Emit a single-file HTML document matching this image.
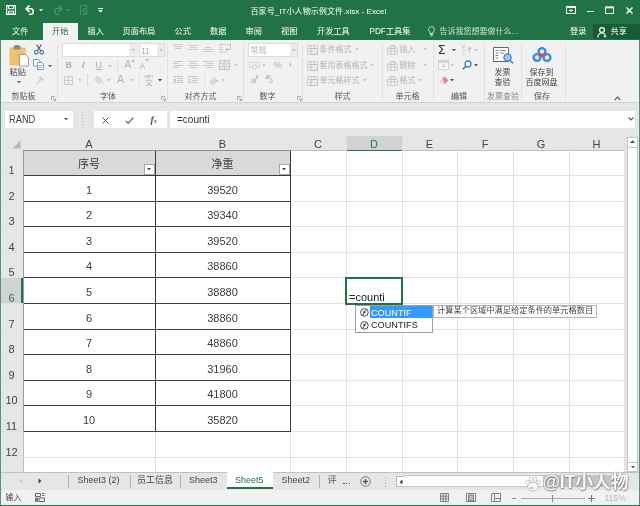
<!DOCTYPE html>
<html><head><meta charset="utf-8"><title>Excel</title>
<style>
*{box-sizing:border-box;margin:0;padding:0}
html,body{width:640px;height:506px;overflow:hidden;background:#e6e6e6}
body{position:relative;will-change:transform;font-family:"Liberation Sans","Noto Sans CJK SC",sans-serif;font-size:9px;color:#333}
.a{position:absolute}
.t{position:absolute;white-space:nowrap;line-height:1}
.tab{position:absolute;top:27px;color:#fff;font-size:8.2px;line-height:9px;white-space:nowrap}
.gl{position:absolute;top:93px;font-size:8px;color:#666;line-height:8px;white-space:nowrap}
.rt{position:absolute;font-size:8px;color:#b4b4b4;line-height:8px;white-space:nowrap}
.sep{position:absolute;top:44px;width:1px;height:56px;background:#e2e2e2}
.ch{position:absolute;top:137.6px;height:13px;font-size:11px;line-height:13px;text-align:center;color:#444}
.rh{position:absolute;left:0.5px;width:22px;font-size:11px;text-align:center;color:#444;line-height:12px}
.cell{position:absolute;font-size:11px;text-align:center;color:#3a3a3a}
.st{position:absolute;top:475px;font-size:9px;line-height:11px;color:#444;white-space:nowrap}
.gv{position:absolute;width:1px;background:#e1e1e1}
.gh{position:absolute;height:1px;background:#e1e1e1}
.bv{position:absolute;width:1px;background:#3c3c3c}
.bh{position:absolute;height:1px;background:#3c3c3c}
</style></head><body>
<div class="a" style="left:0px;top:0px;width:640px;height:40px;background:#217346"></div>
<div class="t" style="left:250.5px;top:7.8px;font-size:8.1px;color:#fff;">百家号_IT小人物示例文件.xlsx - Excel</div>
<svg class="a" style="left:6px;top:5px" width="10" height="10" viewBox="0 0 10 10"><path d="M0.6 0.6h8.800v8.800h-8.800z" fill="none" stroke="#fff" stroke-width="1.200"/><path d="M2.500 0.500h5v3.200h-5z" fill="none" stroke="#fff" stroke-width="1"/><path d="M2.500 6.200h5v3.300h-5z" fill="none" stroke="#fff" stroke-width="1"/><path d="M3 7.500h4v2h-4z" fill="#fff" opacity="0.5"/></svg>
<svg class="a" style="left:25px;top:5px" width="11" height="10" viewBox="0 0 11 10"><path d="M4.5 0.5L1 3.8l3.5 3.2" fill="none" stroke="#fff" stroke-width="1.6"/><path d="M1.5 3.8h5a3 3 0 0 1 0 5.5H4" fill="none" stroke="#fff" stroke-width="1.6"/></svg>
<svg class="a" style="left:39px;top:8.8px" width="4" height="2.4" viewBox="0 0 4 2.4"><path d="M0 0h4L2 2.4z" fill="#fff"/></svg>
<svg class="a" style="left:52px;top:5px" width="11" height="10" viewBox="0 0 11 10"><path d="M6.5 0.5L10 3.8 6.5 7" fill="none" stroke="#4d8d6b" stroke-width="1.6"/><path d="M9.5 3.8h-5a3 3 0 0 0 0 5.5H7" fill="none" stroke="#4d8d6b" stroke-width="1.6"/></svg>
<svg class="a" style="left:66px;top:8.8px" width="4" height="2.4" viewBox="0 0 4 2.4"><path d="M0 0h4L2 2.4z" fill="#4d8d6b"/></svg>
<svg class="a" style="left:80px;top:5px" width="9" height="10" viewBox="0 0 9 10"><path d="M0.5 0.5h6v9h-6z" fill="none" stroke="#4d8d6b"/><circle cx="5" cy="5.5" r="2.3" fill="#2f7d54" stroke="#4d8d6b"/><path d="M6.5 7.5l2 2" stroke="#4d8d6b"/></svg>
<svg class="a" style="left:98px;top:8px" width="5" height="5" viewBox="0 0 5 5"><path d="M0 0.5h5" stroke="#fff"/><path d="M0 2h5L2.5 4.6z" fill="#fff"/></svg>
<svg class="a" style="left:566px;top:6px" width="10" height="8" viewBox="0 0 10 8"><path d="M0.5 0.5h9v7h-9z" fill="none" stroke="#fff"/><path d="M0.5 1.5h9" stroke="#fff"/><path d="M3 4.5h4M5 3v3" stroke="#fff" stroke-width="1"/></svg>
<div class="a" style="left:587px;top:10.5px;width:7px;height:1.6px;background:#fff"></div>
<svg class="a" style="left:605px;top:6px" width="9" height="8" viewBox="0 0 9 8"><path d="M0.5 1h8v6.5h-8z" fill="none" stroke="#fff"/><path d="M0.5 1.5h8" stroke="#fff" stroke-width="1.6"/></svg>
<svg class="a" style="left:626px;top:7px" width="7" height="7" viewBox="0 0 7 7"><path d="M0.5 0.5l6 6M6.5 0.5l-6 6" stroke="#fff" stroke-width="1.5"/></svg>
<div class="a" style="left:43px;top:23px;width:35px;height:18px;background:#f1f1f1"></div>
<div class="a" style="left:593px;top:24px;width:47px;height:15px;background:#185c37"></div>
<div class="tab" style="left:12px;color:#fff">文件</div>
<div class="tab" style="left:52px;color:#217346">开始</div>
<div class="tab" style="left:87.5px;color:#fff">插入</div>
<div class="tab" style="left:122.5px;color:#fff">页面布局</div>
<div class="tab" style="left:174.5px;color:#fff">公式</div>
<div class="tab" style="left:210px;color:#fff">数据</div>
<div class="tab" style="left:245.5px;color:#fff">审阅</div>
<div class="tab" style="left:281px;color:#fff">视图</div>
<div class="tab" style="left:317px;color:#fff">开发工具</div>
<div class="tab" style="left:369.5px;color:#fff">PDF工具集</div>
<div class="tab" style="left:570px;color:#fff">登录</div>
<div class="tab" style="left:610.5px;color:#fff">共享</div>
<div class="tab" style="left:439.5px;color:#cfe3d8;font-size:8px">告诉我您想要做什么...</div>
<svg class="a" style="left:428px;top:26px" width="7" height="11" viewBox="0 0 7 11"><path d="M3.5 0.6a2.9 2.9 0 0 1 1.6 5.3v1.6H1.9V5.9A2.9 2.9 0 0 1 3.5 0.6z" fill="none" stroke="#cfe3d8" stroke-width="0.9"/><path d="M2 8.6h3M2.4 10h2.2" stroke="#cfe3d8" stroke-width="0.9"/></svg>
<svg class="a" style="left:597px;top:27px" width="10" height="11" viewBox="0 0 10 11"><circle cx="5" cy="3" r="2.4" fill="none" stroke="#fff" stroke-width="1.2"/><path d="M0.8 10.5c0-3 2-4.5 4.2-4.5 1.2 0 2.2 0.4 3 1.2" fill="none" stroke="#fff" stroke-width="1.2"/><path d="M6.5 9h3M8 7.5v3" stroke="#fff" stroke-width="1"/></svg>
<div class="a" style="left:0px;top:40px;width:640px;height:63px;background:#f1f1f1;border-bottom:1px solid #d2d2d2"></div>
<div class="gl" style="left:11.5px;color:#555">剪贴板</div>
<div class="gl" style="left:100px;color:#555">字体</div>
<div class="gl" style="left:184.5px;color:#555">对齐方式</div>
<div class="gl" style="left:259.5px;color:#555">数字</div>
<div class="gl" style="left:334.5px;color:#555">样式</div>
<div class="gl" style="left:395.5px;color:#555">单元格</div>
<div class="gl" style="left:451px;color:#555">编辑</div>
<div class="gl" style="left:487px;color:#888">发票查验</div>
<div class="gl" style="left:534px;color:#555">保存</div>
<div class="sep" style="left:57px"></div>
<div class="sep" style="left:166.5px"></div>
<div class="sep" style="left:243px"></div>
<div class="sep" style="left:301.5px"></div>
<div class="sep" style="left:382px"></div>
<div class="sep" style="left:432.5px"></div>
<div class="sep" style="left:483.5px"></div>
<div class="sep" style="left:521px"></div>
<div class="sep" style="left:564.5px"></div>
<svg class="a" style="left:50.5px;top:96px" width="5" height="5" viewBox="0 0 5 5"><path d="M0.5 4V0.5H4" fill="none" stroke="#999" stroke-width="0.8"/><path d="M2 2l2.5 2.5M4.5 2.5v2h-2" fill="none" stroke="#999" stroke-width="0.8"/></svg>
<svg class="a" style="left:161px;top:96px" width="5" height="5" viewBox="0 0 5 5"><path d="M0.5 4V0.5H4" fill="none" stroke="#999" stroke-width="0.8"/><path d="M2 2l2.5 2.5M4.5 2.5v2h-2" fill="none" stroke="#999" stroke-width="0.8"/></svg>
<svg class="a" style="left:237px;top:96px" width="5" height="5" viewBox="0 0 5 5"><path d="M0.5 4V0.5H4" fill="none" stroke="#999" stroke-width="0.8"/><path d="M2 2l2.5 2.5M4.5 2.5v2h-2" fill="none" stroke="#999" stroke-width="0.8"/></svg>
<svg class="a" style="left:297px;top:96px" width="5" height="5" viewBox="0 0 5 5"><path d="M0.5 4V0.5H4" fill="none" stroke="#999" stroke-width="0.8"/><path d="M2 2l2.5 2.5M4.5 2.5v2h-2" fill="none" stroke="#999" stroke-width="0.8"/></svg>
<svg class="a" style="left:614px;top:96px" width="7" height="5" viewBox="0 0 7 5"><path d="M0.7 4.2L3.5 1.2 6.3 4.2" fill="none" stroke="#555" stroke-width="1.2"/></svg>
<svg class="a" style="left:9px;top:45px" width="20" height="22" viewBox="0 0 20 22"><rect x="0.5" y="2.5" width="16" height="18" fill="#efc26a"/><rect x="4.5" y="0.5" width="7" height="4" rx="1" fill="#8a8a8a"/><rect x="6.5" y="0" width="3" height="2" fill="#8a8a8a"/><path d="M10.5 9.5h6l3 3v8.5h-9z" fill="#fff" stroke="#8a8a8a" stroke-width="0.8"/></svg>
<div class="rt" style="left:9.5px;top:68.5px;color:#444;font-size:8.2px">粘贴</div>
<svg class="a" style="left:16.5px;top:80.8px" width="4" height="2.4" viewBox="0 0 4 2.4"><path d="M0 0h4L2 2.4z" fill="#666"/></svg>
<svg class="a" style="left:34px;top:44px" width="10" height="11" viewBox="0 0 10 11"><path d="M2.5 0.5L7 7M7.5 0.5L3 7" stroke="#555" stroke-width="1.1" fill="none"/><circle cx="2.3" cy="8.3" r="1.8" fill="none" stroke="#3d6fb6" stroke-width="1.1"/><circle cx="7.7" cy="8.3" r="1.8" fill="none" stroke="#3d6fb6" stroke-width="1.1"/></svg>
<svg class="a" style="left:33px;top:59px" width="11" height="11" viewBox="0 0 11 11"><path d="M0.5 0.5h5l1.5 1.5v5h-6.5z" fill="#fff" stroke="#6d8fc0" stroke-width="0.9"/><path d="M4.5 3.5h4.5l1.5 1.5v5.5h-6z" fill="#fff" stroke="#6d8fc0" stroke-width="0.9"/><path d="M6 6.5h3M6 8.5h3" stroke="#6d8fc0" stroke-width="0.7"/></svg>
<svg class="a" style="left:48px;top:64.8px" width="4" height="2.4" viewBox="0 0 4 2.4"><path d="M0 0h4L2 2.4z" fill="#666"/></svg>
<svg class="a" style="left:35px;top:75px" width="10" height="10" viewBox="0 0 10 10"><path d="M5.5 0.8l3.5 3.5-2 2L3.500 2.800z" fill="#cfcfcf"/><path d="M4 4.800L1 8.500l1 1 3.500-3.200z" fill="#d8d8d8"/></svg>
<div class="a" style="left:61.5px;top:43px;width:75.5px;height:14px;background:#fff;border:1px solid #dcdcdc"></div>
<div class="a" style="left:129px;top:44px;width:7.5px;height:12px;background:#ececec"></div>
<svg class="a" style="left:131px;top:49.3px" width="4" height="2.4" viewBox="0 0 4 2.4"><path d="M0 0h4L2 2.4z" fill="#c4c4c4"/></svg>
<div class="a" style="left:138.5px;top:43px;width:26px;height:14px;background:#fff;border:1px solid #dcdcdc"></div>
<div class="a" style="left:156.5px;top:44px;width:7.5px;height:12px;background:#ececec"></div>
<svg class="a" style="left:158.5px;top:49.3px" width="4" height="2.4" viewBox="0 0 4 2.4"><path d="M0 0h4L2 2.4z" fill="#c4c4c4"/></svg>
<div class="rt" style="left:141px;top:46.5px;font-size:8.5px;color:#b0b0b0">11</div>
<div class="rt" style="left:65.500px;top:61px;font-size:9px;font-weight:bold;color:#b0b0b0">B</div>
<div class="rt" style="left:81.500px;top:61px;font-size:9px;font-style:italic;font-weight:bold;color:#b0b0b0;font-family:'Liberation Serif',serif">I</div>
<div class="rt" style="left:95.500px;top:61px;font-size:9px;color:#b0b0b0;text-decoration:underline">U</div>
<svg class="a" style="left:107.5px;top:64.8px" width="4" height="2.4" viewBox="0 0 4 2.4"><path d="M0 0h4L2 2.4z" fill="#c8c8c8"/></svg>
<div class="a" style="left:116.5px;top:60px;width:1px;height:12px;background:#dedede"></div>
<div class="rt" style="left:124.500px;top:60.5px;font-size:10px;color:#b4b4b4">A</div>
<div class="rt" style="left:139.500px;top:62px;font-size:8.5px;color:#b4b4b4">A</div>
<svg class="a" style="left:130.5px;top:59px" width="4" height="3" viewBox="0 0 4 3"><path d="M0 3L2 0l2 3z" fill="#c0c0c0"/></svg>
<svg class="a" style="left:144.5px;top:59px" width="4" height="3" viewBox="0 0 4 3"><path d="M0 0h4L2 3z" fill="#c0c0c0"/></svg>
<svg class="a" style="left:63.5px;top:75.5px" width="9" height="9" viewBox="0 0 9 9"><path d="M0.5 0.5h8v8h-8zM0.500 4.500h8M4.500 0.500v8" fill="none" stroke="#c8c8c8" stroke-width="0.9"/></svg>
<svg class="a" style="left:78px;top:79.3px" width="4" height="2.4" viewBox="0 0 4 2.4"><path d="M0 0h4L2 2.4z" fill="#c8c8c8"/></svg>
<div class="a" style="left:87px;top:74px;width:1px;height:12px;background:#dedede"></div>
<svg class="a" style="left:93.5px;top:75px" width="10" height="10" viewBox="0 0 10 10"><path d="M3.5 1l4.500 4.500-3.500 3L1 5z" fill="#dcdcdc" stroke="#c4c4c4" stroke-width="0.8"/><path d="M8.500 6.500c1 1.500 1 2.500 0 2.500s-1-1 0-2.500z" fill="#c8c8c8"/></svg>
<svg class="a" style="left:106.5px;top:79.3px" width="4" height="2.4" viewBox="0 0 4 2.4"><path d="M0 0h4L2 2.4z" fill="#c8c8c8"/></svg>
<div class="rt" style="left:117px;top:75px;font-size:10.5px;color:#b4b4b4">A</div>
<svg class="a" style="left:130px;top:79.3px" width="4" height="2.4" viewBox="0 0 4 2.4"><path d="M0 0h4L2 2.4z" fill="#c8c8c8"/></svg>
<div class="a" style="left:138.5px;top:74px;width:1px;height:12px;background:#dedede"></div>
<div class="rt" style="left:144.5px;top:75px;font-size:4.5px;line-height:4.5px;color:#aaa">wén</div>
<div class="rt" style="left:145.500px;top:79px;font-size:7px;line-height:7px;color:#aaa">文</div>
<svg class="a" style="left:158px;top:79.3px" width="4" height="2.4" viewBox="0 0 4 2.4"><path d="M0 0h4L2 2.4z" fill="#444"/></svg>
<svg class="a" style="left:173px;top:43.5px" width="10" height="9" viewBox="0 0 10 9"><path d="M0 0.5h10" stroke="#c4c4c4" stroke-width="0.9"/><path d="M0 2.5h10" stroke="#c4c4c4" stroke-width="0.9"/><path d="M2 4.5h6" stroke="#c4c4c4" stroke-width="0.9"/></svg>
<svg class="a" style="left:188px;top:45px" width="10" height="9" viewBox="0 0 10 9"><path d="M0 0.5h10" stroke="#c4c4c4" stroke-width="0.9"/><path d="M2 2.5h6" stroke="#c4c4c4" stroke-width="0.9"/><path d="M0 4.5h10" stroke="#c4c4c4" stroke-width="0.9"/></svg>
<svg class="a" style="left:203px;top:47px" width="10" height="9" viewBox="0 0 10 9"><path d="M2 0.5h6" stroke="#c4c4c4" stroke-width="0.9"/><path d="M0 2.5h10" stroke="#c4c4c4" stroke-width="0.9"/><path d="M0 4.5h10" stroke="#c4c4c4" stroke-width="0.9"/></svg>
<svg class="a" style="left:173px;top:61px" width="10" height="9" viewBox="0 0 10 9"><path d="M0 0.5h10" stroke="#c4c4c4" stroke-width="0.9"/><path d="M0 2.5h6" stroke="#c4c4c4" stroke-width="0.9"/><path d="M0 4.5h10" stroke="#c4c4c4" stroke-width="0.9"/><path d="M0 6.5h6" stroke="#c4c4c4" stroke-width="0.9"/></svg>
<svg class="a" style="left:188px;top:61px" width="10" height="9" viewBox="0 0 10 9"><path d="M0 0.5h10" stroke="#c4c4c4" stroke-width="0.9"/><path d="M2 2.5h6" stroke="#c4c4c4" stroke-width="0.9"/><path d="M0 4.5h10" stroke="#c4c4c4" stroke-width="0.9"/><path d="M2 6.5h6" stroke="#c4c4c4" stroke-width="0.9"/></svg>
<svg class="a" style="left:203px;top:61px" width="10" height="9" viewBox="0 0 10 9"><path d="M0 0.5h10" stroke="#c4c4c4" stroke-width="0.9"/><path d="M4 2.5h6" stroke="#c4c4c4" stroke-width="0.9"/><path d="M0 4.5h10" stroke="#c4c4c4" stroke-width="0.9"/><path d="M4 6.5h6" stroke="#c4c4c4" stroke-width="0.9"/></svg>
<svg class="a" style="left:173px;top:76px" width="10" height="9" viewBox="0 0 10 9"><path d="M0 0.5h10" stroke="#c4c4c4" stroke-width="0.9"/><path d="M4 2.5h6" stroke="#c4c4c4" stroke-width="0.9"/><path d="M4 4.5h6" stroke="#c4c4c4" stroke-width="0.9"/><path d="M0 6.5h10" stroke="#c4c4c4" stroke-width="0.9"/></svg>
<svg class="a" style="left:188px;top:76px" width="10" height="9" viewBox="0 0 10 9"><path d="M0 0.5h10" stroke="#c4c4c4" stroke-width="0.9"/><path d="M4 2.5h6" stroke="#c4c4c4" stroke-width="0.9"/><path d="M4 4.5h6" stroke="#c4c4c4" stroke-width="0.9"/><path d="M0 6.5h10" stroke="#c4c4c4" stroke-width="0.9"/></svg>
<svg class="a" style="left:172.5px;top:78px" width="4" height="4" viewBox="0 0 4 4"><path d="M3 0L0.500 2 3 4z" fill="#c4c4c4"/></svg>
<svg class="a" style="left:187.5px;top:78px" width="4" height="4" viewBox="0 0 4 4"><path d="M0.500 0L3 2 0.500 4z" fill="#c4c4c4"/></svg>
<svg class="a" style="left:219px;top:43.5px" width="12" height="10" viewBox="0 0 12 10"><path d="M0 0.500h7M0 3h4M0 5.500h4M0 8h7" stroke="#c4c4c4" stroke-width="0.9"/><path d="M8 0.500h3.500v5H7" fill="none" stroke="#b8b8b8" stroke-width="0.9"/><path d="M8.500 3.500L6.500 5.500l2 2z" fill="#b8b8b8"/></svg>
<svg class="a" style="left:219px;top:60px" width="11" height="10" viewBox="0 0 11 10"><path d="M0.500 0.500h10v9h-10zM0.500 3h10M0.500 7h10M5.500 0.500v2.500M5.500 7v2.500" fill="none" stroke="#c0c0c0" stroke-width="0.9"/><path d="M2.500 5h6" stroke="#bbb" stroke-width="0.8"/></svg>
<svg class="a" style="left:233.5px;top:64.3px" width="4" height="2.4" viewBox="0 0 4 2.4"><path d="M0 0h4L2 2.4z" fill="#c8c8c8"/></svg>
<div class="a" style="left:204px;top:74px;width:1px;height:12px;background:#dedede"></div>
<div class="rt" style="left:209px;top:76.500px;font-size:7px;color:#b8b8b8;transform:rotate(-40deg)">ab</div>
<svg class="a" style="left:213px;top:80px" width="5" height="5" viewBox="0 0 5 5"><path d="M0 4.500L4.500 0M2 0h2.500v2.500" fill="none" stroke="#b8b8b8" stroke-width="0.8"/></svg>
<svg class="a" style="left:221px;top:79.3px" width="4" height="2.4" viewBox="0 0 4 2.4"><path d="M0 0h4L2 2.4z" fill="#c8c8c8"/></svg>
<div class="a" style="left:248px;top:43px;width:49.5px;height:14px;background:#fff;border:1px solid #dcdcdc"></div>
<div class="a" style="left:289.5px;top:44px;width:7.5px;height:12px;background:#ececec"></div>
<svg class="a" style="left:291.5px;top:49.3px" width="4" height="2.4" viewBox="0 0 4 2.4"><path d="M0 0h4L2 2.4z" fill="#c4c4c4"/></svg>
<div class="rt" style="left:250.500px;top:46.5px;color:#b4b4b4">常规</div>
<svg class="a" style="left:249px;top:60px" width="11" height="10" viewBox="0 0 11 10"><path d="M0.500 2.500h10v5h-10z" fill="none" stroke="#c4c4c4" stroke-width="0.9" stroke-dasharray="2 1"/><circle cx="5.500" cy="7" r="2.200" fill="#f1f1f1" stroke="#c4c4c4" stroke-width="0.800"/></svg>
<svg class="a" style="left:262px;top:64.3px" width="4" height="2.4" viewBox="0 0 4 2.4"><path d="M0 0h4L2 2.4z" fill="#c8c8c8"/></svg>
<div class="rt" style="left:273.500px;top:61px;font-size:9.500px;color:#b0b0b0">%</div>
<div class="rt" style="left:289px;top:58px;font-size:10px;font-weight:bold;color:#b0b0b0">,</div>
<div class="rt" style="left:250px;top:75.500px;font-size:4.500px;line-height:4.5px;color:#aaa;font-weight:bold">←.0<br>.00</div>
<div class="rt" style="left:264.500px;top:75.500px;font-size:4.500px;line-height:4.5px;color:#aaa;font-weight:bold">.00<br>→.0</div>
<svg class="a" style="left:307px;top:44.5px" width="11" height="10" viewBox="0 0 11 10"><path d="M0.500 0.500h10v9h-10zM0.500 3.500h10M0.500 6.500h10M4 0.500v9M7.500 0.500v9" fill="none" stroke="#c8c8c8" stroke-width="0.800"/><path d="M4 3.500h6.500v6h-6.500z" fill="#e9e9e9" stroke="#bdbdbd" stroke-width="0.800"/></svg>
<div class="rt" style="left:319.500px;top:45.5px">条件格式</div>
<svg class="a" style="left:355px;top:48.3px" width="4" height="2.4" viewBox="0 0 4 2.4"><path d="M0 0h4L2 2.4z" fill="#c8c8c8"/></svg>
<svg class="a" style="left:307px;top:60.5px" width="11" height="10" viewBox="0 0 11 10"><path d="M0.500 0.500h10v9h-10zM0.500 3.500h10M0.500 6.500h10M4 0.500v9M7.500 0.500v9" fill="none" stroke="#c8c8c8" stroke-width="0.800"/><path d="M4 3.500h6.500v6h-6.500z" fill="#e9e9e9" stroke="#bdbdbd" stroke-width="0.800"/></svg>
<div class="rt" style="left:319.500px;top:61.5px">套用表格格式</div>
<svg class="a" style="left:370px;top:64.3px" width="4" height="2.4" viewBox="0 0 4 2.4"><path d="M0 0h4L2 2.4z" fill="#c8c8c8"/></svg>
<svg class="a" style="left:307px;top:75.5px" width="11" height="10" viewBox="0 0 11 10"><path d="M0.500 0.500h10v9h-10zM0.500 3.500h10M0.500 6.500h10M4 0.500v9M7.500 0.500v9" fill="none" stroke="#c8c8c8" stroke-width="0.800"/><path d="M4 3.500h6.500v6h-6.500z" fill="#e9e9e9" stroke="#bdbdbd" stroke-width="0.800"/></svg>
<div class="rt" style="left:319.500px;top:76.5px">单元格样式</div>
<svg class="a" style="left:362.5px;top:79.3px" width="4" height="2.4" viewBox="0 0 4 2.4"><path d="M0 0h4L2 2.4z" fill="#c8c8c8"/></svg>
<svg class="a" style="left:387px;top:44.5px" width="11" height="10" viewBox="0 0 11 10"><path d="M0.500 3h10v6.500h-10zM0.500 6h10M4 3v6.500M7.500 3v6.500" fill="none" stroke="#c8c8c8" stroke-width="0.800"/><path d="M3 0.500h5v3h-5z" fill="#e4e4e4" stroke="#bdbdbd" stroke-width="0.800"/></svg>
<div class="rt" style="left:399.500px;top:45.5px">插入</div>
<svg class="a" style="left:422.5px;top:48.3px" width="4" height="2.4" viewBox="0 0 4 2.4"><path d="M0 0h4L2 2.4z" fill="#c8c8c8"/></svg>
<svg class="a" style="left:387px;top:60.5px" width="11" height="10" viewBox="0 0 11 10"><path d="M0.500 3h10v6.500h-10zM0.500 6h10M4 3v6.500M7.500 3v6.500" fill="none" stroke="#c8c8c8" stroke-width="0.800"/><path d="M3 0.500h5v3h-5z" fill="#e4e4e4" stroke="#bdbdbd" stroke-width="0.800"/></svg>
<div class="rt" style="left:399.500px;top:61.5px">删除</div>
<svg class="a" style="left:422.5px;top:64.3px" width="4" height="2.4" viewBox="0 0 4 2.4"><path d="M0 0h4L2 2.4z" fill="#c8c8c8"/></svg>
<svg class="a" style="left:387px;top:75.5px" width="11" height="10" viewBox="0 0 11 10"><path d="M0.500 3h10v6.500h-10zM0.500 6h10M4 3v6.500M7.500 3v6.500" fill="none" stroke="#c8c8c8" stroke-width="0.800"/><path d="M3 0.500h5v3h-5z" fill="#e4e4e4" stroke="#bdbdbd" stroke-width="0.800"/></svg>
<div class="rt" style="left:399.500px;top:76.5px">格式</div>
<svg class="a" style="left:418px;top:79.3px" width="4" height="2.4" viewBox="0 0 4 2.4"><path d="M0 0h4L2 2.4z" fill="#c8c8c8"/></svg>
<div class="rt" style="left:437.500px;top:42.500px;font-size:13px;line-height:13px;color:#333;font-family:'DejaVu Sans',sans-serif">Σ</div>
<svg class="a" style="left:452px;top:48.8px" width="4" height="2.4" viewBox="0 0 4 2.4"><path d="M0 0h4L2 2.4z" fill="#555"/></svg>
<svg class="a" style="left:461px;top:43.5px" width="11" height="11" viewBox="0 0 11 11"><path d="M1 0.500l1.500 4M4 0.500l-1.500 4M1.800 3h1.500" fill="none" stroke="#b8c4d4" stroke-width="0.700"/><path d="M1 6.500h3l-3 4h3" fill="none" stroke="#c8c8c8" stroke-width="0.700"/><path d="M6 3.500h5l-2 2.500v3.500l-1-1v-2.500z" fill="#c4c4c4"/></svg>
<svg class="a" style="left:474px;top:48.8px" width="4" height="2.4" viewBox="0 0 4 2.4"><path d="M0 0h4L2 2.4z" fill="#c8c8c8"/></svg>
<svg class="a" style="left:438px;top:60px" width="11" height="10" viewBox="0 0 11 10"><path d="M0.500 0.500h10v9h-10z" fill="#fafafa" stroke="#c8c8c8" stroke-width="0.800"/><path d="M0.500 2h10" stroke="#c8c8c8" stroke-width="1.500"/><path d="M5.500 3.500v3.500M3.500 5.500l2 2 2-2" fill="none" stroke="#bcbcbc" stroke-width="0.900"/></svg>
<svg class="a" style="left:450px;top:64.3px" width="4" height="2.4" viewBox="0 0 4 2.4"><path d="M0 0h4L2 2.4z" fill="#c8c8c8"/></svg>
<svg class="a" style="left:461.5px;top:60px" width="10" height="10" viewBox="0 0 10 10"><circle cx="6" cy="4" r="3" fill="#fff" stroke="#3a78c4" stroke-width="1.300"/><path d="M3.800 6.200L0.800 9.200" stroke="#3a78c4" stroke-width="1.600"/></svg>
<svg class="a" style="left:474px;top:64.3px" width="4" height="2.4" viewBox="0 0 4 2.4"><path d="M0 0h4L2 2.4z" fill="#555"/></svg>
<svg class="a" style="left:439px;top:75.5px" width="10" height="9" viewBox="0 0 10 9"><path d="M5.500 0.500l4 4-3.500 3.500h-2.500L1 5.500z" fill="#e8829a"/><path d="M1 5.500l2.500 2.500h2.500L3.500 3z" fill="#f6d2da"/></svg>
<svg class="a" style="left:450px;top:79.3px" width="4" height="2.4" viewBox="0 0 4 2.4"><path d="M0 0h4L2 2.4z" fill="#555"/></svg>
<svg class="a" style="left:493px;top:47px" width="21" height="17" viewBox="0 0 21 17"><path d="M0.500 0.500h15v14h-15z" fill="#fff" stroke="#555" stroke-width="0.900"/><path d="M2.500 3.500h3M7 3.500h6M2.500 6h3M7 6h4M2.500 8.500h3M2.500 11h3" stroke="#777" stroke-width="0.900"/><circle cx="14.500" cy="10.500" r="3.600" fill="#9ccaf0" stroke="#2f7fd0" stroke-width="1.200"/><path d="M17 13.200l3 3" stroke="#2f7fd0" stroke-width="1.600"/></svg>
<div class="rt" style="left:494.500px;top:68.500px;color:#444">发票</div>
<div class="rt" style="left:494.500px;top:78.8px;color:#444">查验</div>
<svg class="a" style="left:531px;top:46px" width="22" height="18" viewBox="0 0 22 18"><circle cx="11" cy="5.5" r="3.4" fill="none" stroke="#2f8cf0" stroke-width="2.4"/><circle cx="6" cy="11.5" r="3.4" fill="none" stroke="#2f8cf0" stroke-width="2.4"/><circle cx="16" cy="11.5" r="3.4" fill="none" stroke="#2f8cf0" stroke-width="2.4"/><path d="M7.800 7.200a3.400 3.400 0 0 0 6.400 0" fill="none" stroke="#e8434f" stroke-width="2.400"/><circle cx="11" cy="9.500" r="1.500" fill="#e8434f"/></svg>
<div class="rt" style="left:529.500px;top:68.500px;color:#444">保存到</div>
<div class="rt" style="left:525.500px;top:78.8px;color:#444">百度网盘</div>
<div class="a" style="left:4.5px;top:110.5px;width:68px;height:17.5px;background:#fff"></div>
<div class="t" style="left:9px;top:114px;font-size:10.8px;color:#444;transform:scaleX(0.86);transform-origin:0 0">RAND</div>
<svg class="a" style="left:64px;top:117.8px" width="4" height="2.4" viewBox="0 0 4 2.4"><path d="M0 0h4L2 2.4z" fill="#555"/></svg>
<div class="a" style="left:82px;top:111.5px;width:1px;height:1px;background:#b0b0b0"></div>
<div class="a" style="left:82px;top:114.5px;width:1px;height:1px;background:#b0b0b0"></div>
<div class="a" style="left:82px;top:117.5px;width:1px;height:1px;background:#b0b0b0"></div>
<div class="a" style="left:82px;top:120.5px;width:1px;height:1px;background:#b0b0b0"></div>
<div class="a" style="left:82px;top:123.5px;width:1px;height:1px;background:#b0b0b0"></div>
<div class="a" style="left:93.5px;top:110.5px;width:73px;height:17.5px;background:#fff"></div>
<svg class="a" style="left:102px;top:116.5px" width="7" height="7" viewBox="0 0 7 7"><path d="M0.500 0.500l6 6M6.500 0.500l-6 6" stroke="#555" stroke-width="1"/></svg>
<svg class="a" style="left:125px;top:116.5px" width="9" height="7" viewBox="0 0 9 7"><path d="M0.700 3.800l2.500 2.500L8.300 0.700" fill="none" stroke="#555" stroke-width="1.100"/></svg>
<div class="t" style="left:150.500px;top:114.5px;font-size:10px;font-style:italic;font-weight:bold;color:#555;font-family:'Liberation Serif',serif">f<span style="font-size:6px">x</span></div>
<div class="a" style="left:169.5px;top:110.5px;width:465.5px;height:17.5px;background:#fff"></div>
<div class="t" style="left:177px;top:114.5px;font-size:10px;color:#333;">=counti</div>
<svg class="a" style="left:627.5px;top:117px" width="6" height="4" viewBox="0 0 6 4"><path d="M0.500 0.500l2.500 2.500 2.500-2.500" fill="none" stroke="#555" stroke-width="1.100"/></svg>
<div class="a" style="left:23px;top:150px;width:601px;height:322px;background:#fff"></div>
<div class="a" style="left:1px;top:136px;width:623.5px;height:15px;background:#e6e6e6;border-bottom:1px solid #bdbdbd"></div>
<div class="a" style="left:345.5px;top:136px;width:57px;height:15px;background:#d2d2d2;border-bottom:1.5px solid #217346"></div>
<div class="a" style="left:1px;top:150px;width:22.5px;height:322px;background:#e6e6e6;border-right:1px solid #bdbdbd"></div>
<div class="a" style="left:1px;top:277px;width:22px;height:26px;background:#d2d2d2;border-right:2px solid #217346"></div>
<svg class="a" style="left:11.5px;top:139.5px" width="9" height="9" viewBox="0 0 9 9"><path d="M8.500 0.500v8h-8z" fill="#b7b7b7"/></svg>
<div class="ch" style="left:23px;width:132px;color:#444">A</div>
<div class="ch" style="left:155px;width:135px;color:#444">B</div>
<div class="ch" style="left:290px;width:56px;color:#444">C</div>
<div class="ch" style="left:346px;width:56px;color:#217346">D</div>
<div class="ch" style="left:402px;width:55px;color:#444">E</div>
<div class="ch" style="left:457px;width:56px;color:#444">F</div>
<div class="ch" style="left:513px;width:56px;color:#444">G</div>
<div class="ch" style="left:569px;width:55px;color:#444">H</div>
<div class="rh" style="top:163.8px;color:#444">1</div>
<div class="rh" style="top:189.8px;color:#444">2</div>
<div class="rh" style="top:214.8px;color:#444">3</div>
<div class="rh" style="top:240.8px;color:#444">4</div>
<div class="rh" style="top:265.8px;color:#444">5</div>
<div class="rh" style="top:291.8px;color:#217346">6</div>
<div class="rh" style="top:317.8px;color:#444">7</div>
<div class="rh" style="top:342.8px;color:#444">8</div>
<div class="rh" style="top:368.8px;color:#444">9</div>
<div class="rh" style="top:393.8px;color:#444">10</div>
<div class="rh" style="top:419.8px;color:#444">11</div>
<div class="rh" style="top:445.8px;color:#444">12</div>
<div class="gv" style="left:155px;top:137px;height:335px"></div>
<div class="gv" style="left:290px;top:137px;height:335px"></div>
<div class="gv" style="left:346px;top:137px;height:335px"></div>
<div class="gv" style="left:402px;top:137px;height:335px"></div>
<div class="gv" style="left:457px;top:137px;height:335px"></div>
<div class="gv" style="left:513px;top:137px;height:335px"></div>
<div class="gv" style="left:569px;top:137px;height:335px"></div>
<div class="gv" style="left:624px;top:137px;height:335px"></div>
<div class="gh" style="left:1px;top:175px;width:623px"></div>
<div class="gh" style="left:1px;top:201px;width:623px"></div>
<div class="gh" style="left:1px;top:226px;width:623px"></div>
<div class="gh" style="left:1px;top:252px;width:623px"></div>
<div class="gh" style="left:1px;top:277px;width:623px"></div>
<div class="gh" style="left:1px;top:303px;width:623px"></div>
<div class="gh" style="left:1px;top:329px;width:623px"></div>
<div class="gh" style="left:1px;top:354px;width:623px"></div>
<div class="gh" style="left:1px;top:380px;width:623px"></div>
<div class="gh" style="left:1px;top:405px;width:623px"></div>
<div class="gh" style="left:1px;top:431px;width:623px"></div>
<div class="gh" style="left:1px;top:457px;width:623px"></div>
<div class="a" style="left:23px;top:150px;width:267px;height:25px;background:#d9d9d9"></div>
<div class="cell" style="left:23px;width:132px;top:150px;height:25px;line-height:28px">序号</div>
<div class="cell" style="left:155px;width:135px;top:150px;height:25px;line-height:28px">净重</div>
<div class="cell" style="left:23px;width:132px;top:175px;height:26px;line-height:30px">1</div>
<div class="cell" style="left:155px;width:135px;top:175px;height:26px;line-height:30px">39520</div>
<div class="cell" style="left:23px;width:132px;top:201px;height:25px;line-height:29px">2</div>
<div class="cell" style="left:155px;width:135px;top:201px;height:25px;line-height:29px">39340</div>
<div class="cell" style="left:23px;width:132px;top:226px;height:26px;line-height:30px">3</div>
<div class="cell" style="left:155px;width:135px;top:226px;height:26px;line-height:30px">39520</div>
<div class="cell" style="left:23px;width:132px;top:252px;height:25px;line-height:29px">4</div>
<div class="cell" style="left:155px;width:135px;top:252px;height:25px;line-height:29px">38860</div>
<div class="cell" style="left:23px;width:132px;top:277px;height:26px;line-height:30px">5</div>
<div class="cell" style="left:155px;width:135px;top:277px;height:26px;line-height:30px">38880</div>
<div class="cell" style="left:23px;width:132px;top:303px;height:26px;line-height:30px">6</div>
<div class="cell" style="left:155px;width:135px;top:303px;height:26px;line-height:30px">38860</div>
<div class="cell" style="left:23px;width:132px;top:329px;height:25px;line-height:29px">7</div>
<div class="cell" style="left:155px;width:135px;top:329px;height:25px;line-height:29px">48860</div>
<div class="cell" style="left:23px;width:132px;top:354px;height:26px;line-height:30px">8</div>
<div class="cell" style="left:155px;width:135px;top:354px;height:26px;line-height:30px">31960</div>
<div class="cell" style="left:23px;width:132px;top:380px;height:25px;line-height:29px">9</div>
<div class="cell" style="left:155px;width:135px;top:380px;height:25px;line-height:29px">41800</div>
<div class="cell" style="left:23px;width:132px;top:405px;height:26px;line-height:30px">10</div>
<div class="cell" style="left:155px;width:135px;top:405px;height:26px;line-height:30px">35820</div>
<div class="bh" style="left:23px;top:175px;width:268px"></div>
<div class="bh" style="left:23px;top:201px;width:268px"></div>
<div class="bh" style="left:23px;top:226px;width:268px"></div>
<div class="bh" style="left:23px;top:252px;width:268px"></div>
<div class="bh" style="left:23px;top:277px;width:268px"></div>
<div class="bh" style="left:23px;top:303px;width:268px"></div>
<div class="bh" style="left:23px;top:329px;width:268px"></div>
<div class="bh" style="left:23px;top:354px;width:268px"></div>
<div class="bh" style="left:23px;top:380px;width:268px"></div>
<div class="bh" style="left:23px;top:405px;width:268px"></div>
<div class="bh" style="left:23px;top:431px;width:268px"></div>
<div class="bv" style="left:155px;top:150px;height:282px"></div>
<div class="bv" style="left:290px;top:150px;height:282px"></div>
<div class="bh" style="left:23px;top:150px;width:268px;background:#8c8c8c"></div>
<div class="bv" style="left:23px;top:150px;height:282px;background:#9a9a9a"></div>
<div class="a" style="left:144px;top:164px;width:10.5px;height:10.5px;background:#fff;border:1px solid #a6a6a6"></div>
<svg class="a" style="left:147.3px;top:168.3px" width="4" height="2.4" viewBox="0 0 4 2.4"><path d="M0 0h4L2 2.4z" fill="#444"/></svg>
<div class="a" style="left:279px;top:164px;width:10.5px;height:10.5px;background:#fff;border:1px solid #a6a6a6"></div>
<svg class="a" style="left:282.3px;top:168.3px" width="4" height="2.4" viewBox="0 0 4 2.4"><path d="M0 0h4L2 2.4z" fill="#444"/></svg>
<div class="a" style="left:345px;top:277px;width:58px;height:27.5px;border:2px solid #217346;background:#fff"></div>
<div class="t" style="left:349px;top:291.5px;font-size:11px;color:#222;">=counti</div>
<div class="a" style="left:355px;top:305px;width:78px;height:27.5px;background:#fff;border:1px solid #a0a0a0"></div>
<div class="a" style="left:369.5px;top:306px;width:62.5px;height:12.4px;background:#3399ff"></div>
<div class="t" style="left:371.2px;top:308px;font-size:9.8px;color:#fff;transform:scaleX(0.935);transform-origin:0 0">COUNTIF</div>
<div class="t" style="left:371.2px;top:320.3px;font-size:9.8px;color:#222;transform:scaleX(0.935);transform-origin:0 0">COUNTIFS</div>
<svg class="a" style="left:360px;top:308px" width="9" height="9" viewBox="0 0 9 9"><circle cx="4.400" cy="4.400" r="3.800" fill="#fff" stroke="#333" stroke-width="0.900"/><path d="M2.600 6.800c1.100 0 1.400-0.700 1.600-2.200s0.500-2.200 1.700-2.200M3.100 4.100h2.600" fill="none" stroke="#222" stroke-width="1"/></svg>
<svg class="a" style="left:360px;top:320.5px" width="9" height="9" viewBox="0 0 9 9"><circle cx="4.400" cy="4.400" r="3.800" fill="#fff" stroke="#333" stroke-width="0.900"/><path d="M2.600 6.800c1.100 0 1.400-0.700 1.600-2.200s0.500-2.200 1.700-2.200M3.100 4.100h2.600" fill="none" stroke="#222" stroke-width="1"/></svg>
<div class="a" style="left:433px;top:304.5px;width:164px;height:13px;background:#fff;border:1px solid #b4b4b4"></div>
<div class="t" style="left:437px;top:306.5px;font-size:8.22px;color:#444;">计算某个区域中满足给定条件的单元格数目</div>
<div class="a" style="left:624.5px;top:136px;width:16px;height:336px;background:#e3e3e3"></div>
<div class="a" style="left:627px;top:137px;width:11px;height:335px;background:#fff;border:1px solid #c6c6c6"></div>
<div class="a" style="left:627px;top:147px;width:11px;height:1px;background:#c6c6c6"></div>
<div class="a" style="left:627px;top:461.5px;width:11px;height:1px;background:#c6c6c6"></div>
<svg class="a" style="left:630px;top:140px" width="5" height="3" viewBox="0 0 5 3"><path d="M0 3h5L2.5 0z" fill="#555"/></svg>
<svg class="a" style="left:630.5px;top:465.8px" width="4" height="2.4" viewBox="0 0 4 2.4"><path d="M0 0h4L2 2.4z" fill="#555"/></svg>
<div class="a" style="left:0px;top:472px;width:640px;height:18px;background:#e6e6e6;border-top:1px solid #c0c0c0"></div>
<div class="a" style="left:226.5px;top:472px;width:46.5px;height:16.5px;background:#fff;border-bottom:2px solid #217346"></div>
<svg class="a" style="left:18.5px;top:477.5px" width="4" height="6" viewBox="0 0 4 6"><path d="M3.500 0.500v5L0.500 3z" fill="#c8c8c8"/></svg>
<svg class="a" style="left:37.5px;top:477.5px" width="4" height="6" viewBox="0 0 4 6"><path d="M0.500 0.500v5L3.500 3z" fill="#444"/></svg>
<div class="a" style="left:68px;top:475px;width:1px;height:12.5px;background:#b4b4b4"></div>
<div class="a" style="left:129.5px;top:475px;width:1px;height:12.5px;background:#b4b4b4"></div>
<div class="a" style="left:180px;top:475px;width:1px;height:12.5px;background:#b4b4b4"></div>
<div class="a" style="left:319px;top:475px;width:1px;height:12.5px;background:#b4b4b4"></div>
<div class="st" style="left:77.5px;color:#444">Sheet3 (2)</div>
<div class="st" style="left:137px;color:#444">员工信息</div>
<div class="st" style="left:189px;color:#444">Sheet3</div>
<div class="st" style="left:235px;color:#217346">Sheet5</div>
<div class="st" style="left:281.5px;color:#444">Sheet2</div>
<div class="st" style="left:327.500px;width:9.5px;overflow:hidden;color:#555">评</div>
<div class="a" style="left:343.0px;top:482.5px;width:1.5px;height:1.5px;background:#217346"></div>
<div class="a" style="left:345.8px;top:482.5px;width:1.5px;height:1.5px;background:#217346"></div>
<div class="a" style="left:348.6px;top:482.5px;width:1.5px;height:1.5px;background:#217346"></div>
<svg class="a" style="left:359.5px;top:476px" width="11" height="11" viewBox="0 0 11 11"><circle cx="5.500" cy="5.500" r="4.800" fill="none" stroke="#777" stroke-width="1"/><path d="M3 5.500h5M5.500 3v5" stroke="#555" stroke-width="1.300"/></svg>
<div class="a" style="left:385px;top:477px;width:1px;height:1px;background:#b0b0b0"></div>
<div class="a" style="left:385px;top:480px;width:1px;height:1px;background:#b0b0b0"></div>
<div class="a" style="left:385px;top:483px;width:1px;height:1px;background:#b0b0b0"></div>
<div class="a" style="left:385px;top:486px;width:1px;height:1px;background:#b0b0b0"></div>
<div class="a" style="left:395.5px;top:475.5px;width:10px;height:11.5px;background:#fff;border:1px solid #b8b8b8"></div>
<svg class="a" style="left:398.5px;top:478.5px" width="4" height="6" viewBox="0 0 4 6"><path d="M3.500 0.500v5L0.500 3z" fill="#444"/></svg>
<div class="a" style="left:405px;top:475px;width:220px;height:12px;background:#fff;border-top:1px solid #c8c8c8;border-bottom:1px solid #c8c8c8"></div>
<div class="a" style="left:543px;top:475.5px;width:82px;height:11px;background:#c4c4c4"></div>
<div class="a" style="left:0px;top:489.5px;width:640px;height:16.5px;background:#f1f1f1"></div>
<div class="t" style="left:5.5px;top:494px;font-size:8px;color:#444;">输入</div>
<svg class="a" style="left:35px;top:493px" width="10" height="9" viewBox="0 0 10 9"><path d="M0.500 0.500h5v3h-5zM0.500 5h2v1.500h-2zM0.500 7h2v1.500h-2zM4 5h5.500v3.500h-5.500zM7 0.500h2.500M7 2.500h2.500" fill="none" stroke="#555" stroke-width="0.900"/></svg>
<svg class="a" style="left:440px;top:493px" width="9" height="9" viewBox="0 0 9 9"><path d="M0.500 0.500h8v8h-8zM0.500 3.200h8M0.500 5.800h8M3.200 0.500v8M5.800 0.500v8" fill="none" stroke="#666" stroke-width="0.800"/></svg>
<svg class="a" style="left:465.5px;top:493px" width="10" height="9" viewBox="0 0 10 9"><path d="M0.500 0.500h9v8h-9z" fill="none" stroke="#666" stroke-width="0.800"/><path d="M2.500 2h5v6h-5zM4 2v6M6 2v6" fill="none" stroke="#666" stroke-width="0.800"/></svg>
<svg class="a" style="left:490.5px;top:493px" width="10" height="9" viewBox="0 0 10 9"><path d="M0.500 0.500h9v8h-9z" fill="none" stroke="#666" stroke-width="0.800"/><path d="M3.500 0.500v5h6M3.500 5.500v3" fill="none" stroke="#666" stroke-width="0.800"/></svg>
<div class="a" style="left:512px;top:497.5px;width:4px;height:1px;background:#888"></div>
<div class="a" style="left:520.5px;top:497.5px;width:64.5px;height:1px;background:#aaa"></div>
<div class="a" style="left:552.3px;top:494.5px;width:1.2px;height:7px;background:#888"></div>
<svg class="a" style="left:587.5px;top:494.5px" width="7" height="7" viewBox="0 0 7 7"><path d="M0 3.500h7M3.500 0v7" stroke="#777" stroke-width="1.100"/></svg>
<div class="t" style="left:604.5px;top:494px;font-size:8.5px;color:#b8b8b8;">115%</div>
<div class="t" style="left:542.5px;top:473px;font-size:18px;font-weight:bold;color:#fff;letter-spacing:-0.3px;text-shadow:0 0 1.500px #666,0.5px 0.5px 1.2px #777;opacity:0.88;line-height:18px">@IT小人物</div>
<svg class="a" style="left:525px;top:475.5px" width="16" height="16" viewBox="0 0 15 15"><ellipse cx="7.500" cy="10" rx="5" ry="4" fill="#fff" stroke="#9a9a9a" stroke-width="0.600"/><ellipse cx="2.500" cy="6" rx="1.600" ry="2.200" fill="#fff" stroke="#9a9a9a" stroke-width="0.500"/><ellipse cx="5.700" cy="3" rx="1.600" ry="2.200" fill="#fff" stroke="#9a9a9a" stroke-width="0.500"/><ellipse cx="9.600" cy="3" rx="1.600" ry="2.200" fill="#fff" stroke="#9a9a9a" stroke-width="0.500"/><ellipse cx="12.600" cy="6" rx="1.600" ry="2.200" fill="#fff" stroke="#9a9a9a" stroke-width="0.500"/><text x="4.300" y="12" font-size="4" fill="#888" font-family="Liberation Sans, sans-serif">du</text></svg>
<div class="a" style="left:0px;top:40px;width:1px;height:466px;background:#5c8f74"></div>
<div class="a" style="left:639px;top:40px;width:1px;height:466px;background:#5c8f74"></div>
<div class="a" style="left:0px;top:504.5px;width:640px;height:1.5px;background:#217346"></div>
</body></html>
